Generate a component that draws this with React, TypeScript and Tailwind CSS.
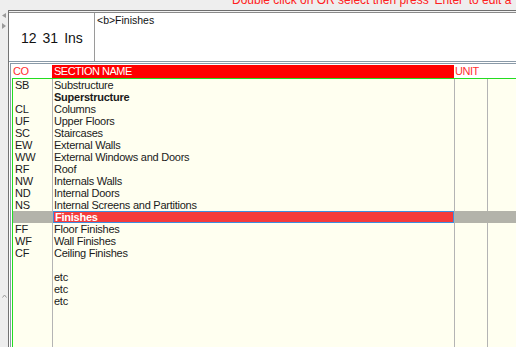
import React from "react";

type Row = { code: string; name: string; bold?: boolean; selected?: boolean };

const rows: Row[] = [
  { code: "SB", name: "Substructure" },
  { code: "", name: "Superstructure", bold: true },
  { code: "CL", name: "Columns" },
  { code: "UF", name: "Upper Floors" },
  { code: "SC", name: "Staircases" },
  { code: "EW", name: "External Walls" },
  { code: "WW", name: "External Windows and Doors" },
  { code: "RF", name: "Roof" },
  { code: "NW", name: "Internals Walls" },
  { code: "ND", name: "Internal Doors" },
  { code: "NS", name: "Internal Screens and Partitions" },
  { code: "", name: "Finishes", selected: true },
  { code: "FF", name: "Floor Finishes" },
  { code: "WF", name: "Wall Finishes" },
  { code: "CF", name: "Ceiling Finishes" },
  { code: "", name: "" },
  { code: "", name: "etc" },
  { code: "", name: "etc" },
  { code: "", name: "etc" },
];

function TableRow({ r }: { r: Row }) {
  if (r.selected) {
    return (
      <div className="flex h-[12px] shrink-0 bg-[#b3b3aa] leading-[12px]">
        <div className="w-[40px] shrink-0 border-r border-[#b3b3aa] pl-[2px]">{r.code}</div>
        <div className="w-[401px] shrink-0 border border-[#3d8fe0] bg-[#f53b3b] pl-[1px] font-bold text-white leading-[10px]">
          {r.name}
        </div>
        <div className="flex-1" />
      </div>
    );
  }
  return (
    <div className="flex h-[12px] shrink-0 leading-[12px]">
      <div className="w-[40px] shrink-0 border-r border-[#b4b4b4] pl-[2px]">{r.code}</div>
      <div
        className={
          "w-[402px] shrink-0 border-r border-[#b4b4b4] pl-[1px] whitespace-nowrap" +
          (r.bold ? " font-bold" : "")
        }
      >
        {r.name}
      </div>
      <div className="w-[33px] shrink-0 border-r border-[#b4b4b4]" />
      <div className="flex-1" />
    </div>
  );
}

export default function App() {
  return (
    <div className="w-[516px] h-[347px] overflow-hidden bg-[#eeeeee] flex flex-col font-['Liberation_Sans',Arial,sans-serif]">
      {/* top message bar */}
      <div className="h-[10px] shrink-0 overflow-hidden">
        <div className="mt-[-7px] pl-[232px] whitespace-nowrap text-[12px] leading-[14px] text-[#ff2020]">
          Double click on OR select then press 'Enter' to edit a
        </div>
      </div>

      <div className="flex flex-1 min-h-0">
        {/* left strip */}
        <div className="w-[8px] shrink-0 flex flex-col items-start pl-[2px] pt-[3px]">
          <svg width="4" height="5" viewBox="0 0 4 5">
            <polygon points="4,0 4,5 0,2.5" fill="#9a9a9a" />
          </svg>
          <svg width="4" height="6" viewBox="0 0 4 6" className="mt-[5px]">
            <polygon points="0,0 0,6 4,3" fill="#9a9a9a" />
          </svg>
          <svg width="5" height="4" viewBox="0 0 5 4" className="mt-[265px]">
            <polyline points="0.5,3.5 2.5,1 4.5,3.5" fill="none" stroke="#9a9a9a" strokeWidth="1" />
          </svg>
        </div>

        {/* main */}
        <div className="flex-1 flex flex-col bg-white border-l border-[#737373] min-w-0">
          <div className="h-[1px] shrink-0 bg-[#6e6e6e]" />
          <div className="h-[1px] shrink-0 bg-[#f2f2f2]" />
          <div className="h-[1px] shrink-0 bg-[#8a8a8a]" />

          {/* header area */}
          <div className="h-[49px] shrink-0 flex border-b border-[#8a9aa8]">
            <div className="w-[85px] shrink-0 flex items-center pl-[12px] gap-[6px] text-[14px] text-[#111] pt-[3px]">
              <span>12</span>
              <span>31</span>
              <span>Ins</span>
            </div>
            <div className="flex-1 border-l border-[#9a9a9a] pl-[2px] pt-[1px] text-[10.5px] leading-[12px] text-[#111]">
              &lt;b&gt;Finishes
            </div>
          </div>

          {/* table */}
          <div className="flex-1 min-h-0 flex flex-col pt-[1px]">
            <div className="flex-1 min-h-0 ml-[1px] flex flex-col border-l border-t border-[#8a9aa8] pt-[1px] text-[11px] tracking-[-0.25px]">
              <div className="flex h-[13px] shrink-0 leading-[13px] tracking-[-0.5px]">
                <div className="w-[41px] shrink-0 pl-[2px] text-[#ff3030]">CO</div>
                <div className="w-[402px] shrink-0 bg-[#ff0000] pl-[2px] text-white">SECTION NAME</div>
                <div className="flex-1 pl-[1px] text-[#ff3030]">UNIT</div>
              </div>
              <div className="flex-1 min-h-0 ml-[1px] flex flex-col border-l border-t border-[#22dd22] bg-[#fffff0] text-[#1a1a1a]">
                {rows.map((r, i) => (
                  <TableRow key={i} r={r} />
                ))}
                <div className="flex flex-1">
                  <div className="w-[40px] shrink-0 border-r border-[#b4b4b4]" />
                  <div className="w-[402px] shrink-0 border-r border-[#b4b4b4]" />
                  <div className="w-[33px] shrink-0 border-r border-[#b4b4b4]" />
                  <div className="flex-1" />
                </div>
              </div>
            </div>
          </div>
        </div>
      </div>
    </div>
  );
}
